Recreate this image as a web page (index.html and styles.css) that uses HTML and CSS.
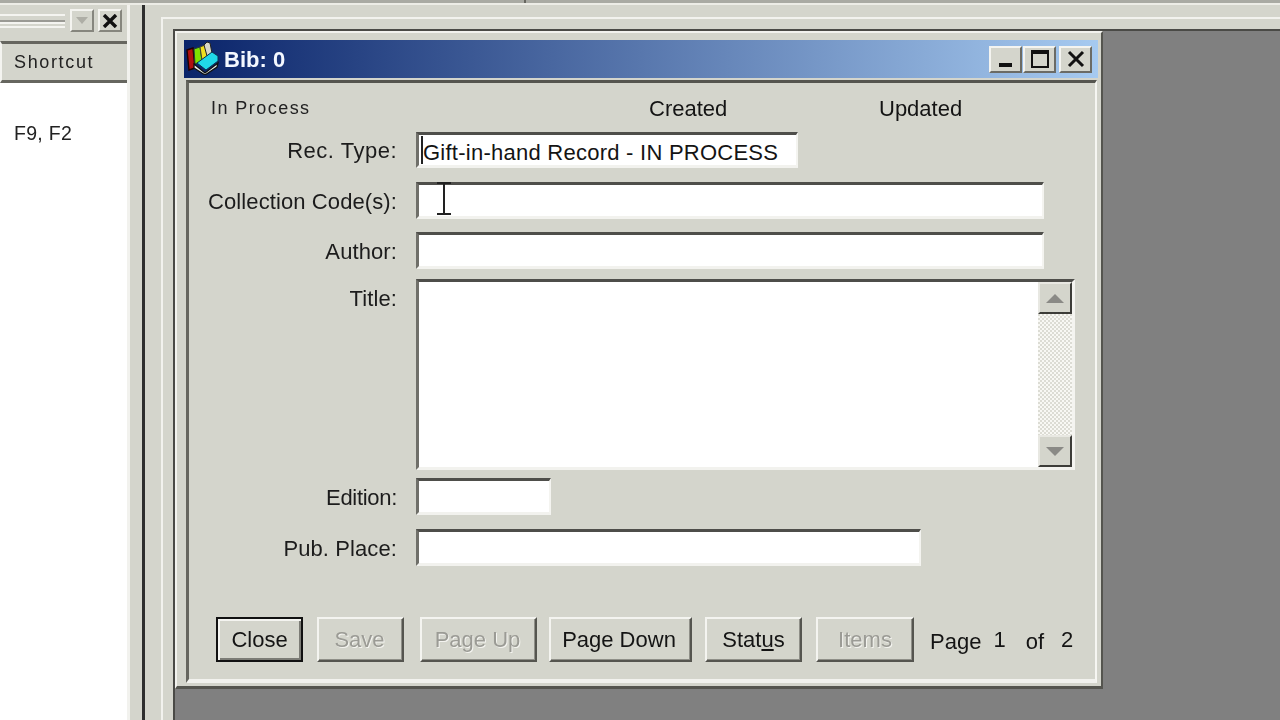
FILE: index.html
```html
<!DOCTYPE html>
<html lang="en">
<head>
<meta charset="utf-8">
<title>Bib: 0</title>
<link rel="stylesheet" href="styles.css">
</head>
<body>
<div class="app">
  <div class="topstrip"></div>
  <div class="workspace">
    <aside class="sidebar">
      <div class="sidebar-panel">
        <div class="dockbar">
          <div class="grip"></div>
          <div class="dockbtn"><svg width="16" height="10" viewBox="0 0 16 10"><path d="M2 1h12L8 8z" fill="#aeaea6"/></svg></div>
          <div class="dockbtn"><svg width="16" height="14" viewBox="0 0 16 14"><path d="M2 1l12 12M14 1L2 13" stroke="#111" stroke-width="3.4" fill="none"/></svg></div>
        </div>
        <div class="colhead">Shortcut</div>
        <div class="sidebar-list"><div class="shortcut">F9, F2</div></div>
      </div>
    </aside>
    <main class="mdi-frame">
      <div class="mdi-client">
        <section class="window">
          <header class="titlebar">
            <svg class="appicon" width="38" height="34" viewBox="0 0 38 34">
              <path d="M5 9l6-2 2 20-6 2z" fill="#b01010" stroke="#200" stroke-width="1.4"/>
              <path d="M12 8l6-2 2 14-7 3z" fill="#7fe000" stroke="#243" stroke-width="1"/>
              <path d="M18 6l5-2 3 12-6 3z" fill="#f0e020" stroke="#443" stroke-width="1"/>
              <path d="M22 4l3-3 3 1 2 10-5 3z" fill="#d8d8c8" stroke="#222" stroke-width="1"/>
              <path d="M15 22l15-11 6 4v5L24 29z" fill="#20d8e8" stroke="#0b3050" stroke-width="1"/>
              <path d="M12 23l11 9 13-10-1 4-12 8-11-7z" fill="#e8f0f0" stroke="#111" stroke-width="1.3"/>
            </svg>
            <span class="title-text">Bib: 0</span>
            <div class="caption-btns">
              <div class="capbtn capbtn-min"><svg width="18" height="6" viewBox="0 0 18 6"><rect x="2" y="1" width="13" height="4" fill="#111"/></svg></div>
              <div class="capbtn"><svg width="20" height="20" viewBox="0 0 20 20"><path d="M2 3.5h16V18H2z" fill="none" stroke="#111" stroke-width="2"/><rect x="1" y="1" width="18" height="4" fill="#111"/></svg></div>
              <div class="capbtn capbtn-close"><svg width="20" height="18" viewBox="0 0 20 18"><path d="M3 2l14 14M17 2L3 16" stroke="#111" stroke-width="3" fill="none"/></svg></div>
            </div>
          </header>
          <div class="body">
            <div class="info-row">
              <span class="status">In Process</span>
              <span class="created">Created</span>
              <span class="updated">Updated</span>
            </div>
            <div class="row row-rec">
              <label class="label label-rec">Rec. Type:</label>
              <div class="field field-rec"><span class="caret"></span><span class="rec-text">Gift-in-hand Record - IN PROCESS</span></div>
            </div>
            <div class="row row-coll">
              <label class="label">Collection Code(s):</label>
              <div class="field field-wide">
                <svg class="ibeam" width="14" height="34" viewBox="0 0 14 34"><path d="M0 1h14M0 32h14M7 1v31" stroke="#222" stroke-width="2" fill="none"/></svg>
              </div>
            </div>
            <div class="row row-author">
              <label class="label">Author:</label>
              <div class="field field-wide"></div>
            </div>
            <div class="row row-title">
              <label class="label label-top">Title:</label>
              <div class="field field-title">
                <div class="scrollbar">
                  <div class="scrollbtn"><svg width="18" height="9" viewBox="0 0 18 9"><path d="M9 0l9 9H0z" fill="#8a8a86"/></svg></div>
                  <div class="track"></div>
                  <div class="scrollbtn"><svg width="18" height="9" viewBox="0 0 18 9"><path d="M0 0h18L9 9z" fill="#8a8a86"/></svg></div>
                </div>
              </div>
            </div>
            <div class="row row-edition">
              <label class="label label-edition">Edition:</label>
              <div class="field field-edition"></div>
            </div>
            <div class="row row-pub">
              <label class="label">Pub. Place:</label>
              <div class="field field-pub"></div>
            </div>
            <footer class="actions">
              <button class="btn btn-default btn-close">Close</button>
              <button class="btn btn-off btn-save">Save</button>
              <button class="btn btn-off btn-up">Page Up</button>
              <button class="btn btn-down">Page Down</button>
              <button class="btn btn-status">Stat<u>u</u>s</button>
              <button class="btn btn-off btn-items">Items</button>
              <div class="pager"><span class="pg-word">Page</span><span class="pg-a">1</span><span class="pg-of">of</span><span class="pg-b">2</span></div>
            </footer>
          </div>
        </section>
      </div>
    </main>
  </div>
</div>
</body>
</html>
```
FILE: styles.css
```css
* { box-sizing: border-box; }
html, body { margin: 0; padding: 0; width: 1280px; height: 720px; overflow: hidden; background: #d4d5cc; }
.app {
  width: 1280px; height: 720px; display: flex; flex-direction: column;
  font-family: "Liberation Sans", Arial, sans-serif; font-size: 22px; color: #141414;
  filter: blur(0.55px);
}
.topstrip { height: 5px; flex: none; background: #a9aaa3; border-bottom: 2px solid #ecece6; }
.topstrip::after { content: ""; display: block; width: 2px; height: 3px; margin-left: 524px; background: #66665f; }
.workspace { flex: 1; display: flex; min-height: 0; }

/* left docked panel */
.sidebar { width: 145px; flex: none; border-right: 3px solid #2e2e2e; padding-right: 12px; display: flex; }
.sidebar-panel { width: 130px; display: flex; flex-direction: column; border-right: 3px solid #f2f2ee; }
.dockbar { height: 33px; flex: none; margin-top: 3px; display: flex; align-items: flex-start; gap: 4px; padding-right: 5px; }
.grip { width: 68px; height: 14px; margin-top: 6px; margin-right: 1px; border-top: 2px solid #f4f4f0; border-bottom: 2px solid #f4f4f0; background: linear-gradient(#d4d5cc 0 4px, #9a9a94 4px 6px, #f4f4f0 6px 8px, #d4d5cc 8px); }
.dockbtn { width: 25px; height: 23px; margin-top: 1px; display: flex; align-items: center; justify-content: center; background: #d4d5cc; border: 2px solid; border-color: #f4f4f0 #86867e #86867e #f4f4f0; }
.colhead { height: 42px; flex: none; border-top: 3px solid #66665f; border-bottom: 3px solid #66665f; border-left: 2px solid #f4f4f0; padding: 1px 0 0 12px; display: flex; align-items: center; font-size: 18px; letter-spacing: 1.65px; color: #222; }
.sidebar-list { flex: 1; background: #fff; padding: 38px 0 0 14px; }
.shortcut { font-size: 19.5px; line-height: 24px; letter-spacing: .3px; color: #222; }

/* MDI area */
.mdi-frame { flex: 1; min-width: 0; padding: 12px 0 0 16px; display: flex; }
.mdi-client { flex: 1; border-top: 2px solid #f2f2ee; border-left: 2px solid #f2f2ee; padding: 10px 0 0 10px; display: flex; position: relative; background: #d4d5cc; }
.mdi-client::before { content: ""; position: absolute; left: 10px; top: 10px; right: 0; bottom: 0; background: #808080; border-top: 2px solid #4a4a46; border-left: 2px solid #4a4a46; }

/* window */
.window { flex: none; position: relative; margin: 2px 0 0 2px; width: 928px; height: 658px; background: #d4d5cc; border-top: 2px solid #f2f2ee; border-left: 2px solid #f2f2ee; border-right: 2px solid #55554f; border-bottom: 3px solid #55554f; padding: 7px 3px 0 7px; display: flex; flex-direction: column; }
.titlebar { height: 38px; flex: none; background: linear-gradient(90deg, #0a246a 0%, #a6caf0 100%); display: flex; align-items: center; padding-right: 6px; }
.appicon { margin: -3px 0 0 -2px; flex: none; }
.title-text { color: #f4f8ff; font-weight: 700; font-size: 22px; margin-left: 4px; margin-top: 1px; }
.caption-btns { margin-left: auto; display: flex; gap: 1px; }
.capbtn { width: 33px; height: 27px; background: #d4d5cc; border: 2px solid; border-color: #f4f4f0 #6b6b65 #6b6b65 #f4f4f0; display: flex; align-items: center; justify-content: center; }
.capbtn-min svg { margin-top: 12px; }
.capbtn-close { margin-left: 2px; }

.body { flex: 1; margin: 2px 1px 3px 2px; border-top: 3px solid #55554f; border-left: 3px solid #66665f; border-right: 2px solid #f6f6f2; border-bottom: 4px solid #f2f2ee; display: flex; flex-direction: column; position: relative; }

.info-row { height: 24px; margin-top: 13px; flex: none; display: flex; align-items: center; }
.status { margin-left: 22px; width: 438px; font-size: 18px; letter-spacing: 1.45px; color: #222; }
.created { width: 230px; margin-top: 2px; }
.updated { margin-top: 2px; }

.row { display: flex; flex: none; }
.row-rec { margin-top: 12px; }
.row-coll { margin-top: 14px; }
.row-author { margin-top: 13px; }
.row-title { margin-top: 10px; }
.row-edition { margin-top: 8px; }
.row-pub { margin-top: 14px; }
.label { width: 208px; text-align: right; margin-right: 19px; align-self: center; flex: none; letter-spacing: .1px; margin-top: 2px; color: #1c1c1c; }
.label-top { align-self: flex-start; margin-top: 7px; }
.label-rec { letter-spacing: .5px; }
.label-edition { letter-spacing: -.3px; }

.field { height: 37px; background: #fff; border-top: 3px solid #4e4e4a; border-left: 3px solid #6f6f69; border-right: 2px solid #f4f4f0; border-bottom: 3px solid #f2f2ee; position: relative; display: flex; align-items: center; flex: none; }
.field-rec { width: 382px; height: 36px; padding-left: 3px; }
.rec-text { letter-spacing: .25px; margin-top: 6px; }
.field-wide { width: 628px; }
.field-title { width: 659px; height: 191px; justify-content: flex-end; align-items: stretch; border-right: 3px solid #f4f4f0; }
.field-edition { width: 135px; }
.field-pub { width: 505px; }
.caret { width: 2px; height: 28px; background: #222; flex: none; margin-left: -1px; }
.ibeam { position: absolute; left: 18px; top: -3px; }

.scrollbar { width: 34px; display: flex; flex-direction: column; }
.scrollbtn { height: 32px; flex: none; background: #d4d5cc; border: 2px solid; border-color: #e8e8e2 #3c3c38 #3c3c38 #e8e8e2; display: flex; align-items: center; justify-content: center; }
.track { flex: 1; background: repeating-conic-gradient(#f8f8f4 0 25%, #dcdcd4 0 50%) 0 0 / 4px 4px; }

.actions { position: absolute; left: 27px; top: 534px; display: flex; align-items: flex-start; }
.btn { height: 45px; padding: 0; font: inherit; color: #141414; background: #d4d5cc; border: 2px solid; border-color: #f4f4f0 #55554f #55554f #f4f4f0; box-shadow: inset -1px -1px 0 #8f8f88; }
.btn-close { width: 87px; border-color: #111; box-shadow: inset 2px 2px 0 #f4f4f0, inset -2px -2px 0 #7c7c76; }
.btn-save { width: 87px; margin-left: 14px; padding-right: 2px; }
.btn-up { width: 117px; margin-left: 16px; padding-right: 2px; }
.btn-down { width: 143px; margin-left: 12px; padding-right: 3px; }
.btn-status { width: 97px; margin-left: 13px; }
.btn-items { width: 98px; margin-left: 14px; }
.btn-off { color: #9b9b95; text-shadow: 1px 1px 0 #f4f4f0; }
.pager { margin: 10px 0 0 16px; display: flex; align-items: flex-start; height: 28px; }
.pg-word { margin-top: 2px; }
.pg-a { margin-left: 12px; }
.pg-of { margin: 2px 0 0 20px; }
.pg-b { margin-left: 17px; }
```
